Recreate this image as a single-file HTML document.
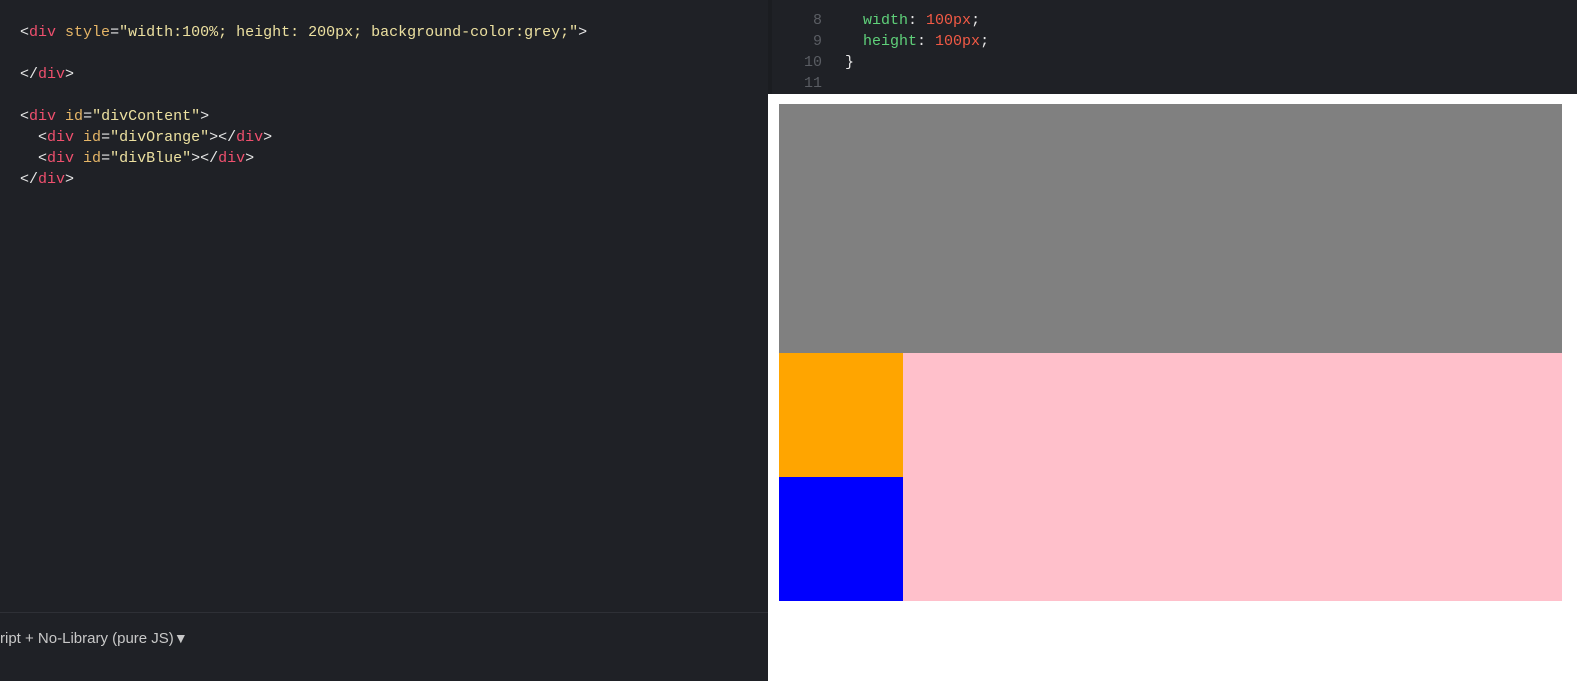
<!DOCTYPE html>
<html><head><style>
html,body{margin:0;padding:0;width:1577px;height:681px;overflow:hidden;background:#1f2126;position:relative}
.code{position:absolute;font-family:"Liberation Mono",monospace;font-size:15px;line-height:21px;white-space:pre;color:#e6e6e6}
.t{color:#f0506e}.a{color:#e5b567}.s{color:#ece0a0}.g{color:#5fd17a}.n{color:#f25a45}.ln{color:#5a5d63}
</style></head><body>
<div class="code" style="left:20px;top:22px">&lt;<span class="t">div</span> <span class="a">style</span>=<span class="s">"width:100%; height: 200px; background-color:grey;"</span>&gt;

&lt;/<span class="t">div</span>&gt;

&lt;<span class="t">div</span> <span class="a">id</span>=<span class="s">"divContent"</span>&gt;
  &lt;<span class="t">div</span> <span class="a">id</span>=<span class="s">"divOrange"</span>&gt;&lt;/<span class="t">div</span>&gt;
  &lt;<span class="t">div</span> <span class="a">id</span>=<span class="s">"divBlue"</span>&gt;&lt;/<span class="t">div</span>&gt;
&lt;/<span class="t">div</span>&gt;</div>
<div style="position:absolute;left:0;top:612px;width:768px;height:1px;background:#2e3036"></div>
<div style="position:absolute;left:0;top:630px;font-family:'Liberation Sans',sans-serif;font-size:15px;color:#c8c8c8">ript + No-Library (pure JS)<span style="font-size:14px">&#9660;</span></div>
<div style="position:absolute;left:768px;top:0;width:4px;height:94px;background:#1b1d21"></div>
<div style="position:absolute;left:772px;top:0;width:805px;height:94px;overflow:hidden">
<div class="code" style="left:0;top:10px;width:50px;text-align:right;color:#5a5d63">8
9
10
11</div>
<div class="code" style="left:73px;top:10px">  <span class="g">width</span>: <span class="n">100px</span>;
  <span class="g">height</span>: <span class="n">100px</span>;
}</div>
<div style="position:absolute;left:0;top:0;width:805px;height:14px;background:#1f2126"></div>
</div>
<div style="position:absolute;left:768px;top:94px;width:809px;height:587px;background:#fff"></div>
<div style="position:absolute;left:779px;top:104px;width:783px;height:249px;background:grey"></div>
<div style="position:absolute;left:779px;top:353px;width:783px;height:248px;background:pink"></div>
<div style="position:absolute;left:779px;top:353px;width:124px;height:124px;background:orange"></div>
<div style="position:absolute;left:779px;top:477px;width:124px;height:124px;background:blue"></div>
</body></html>
